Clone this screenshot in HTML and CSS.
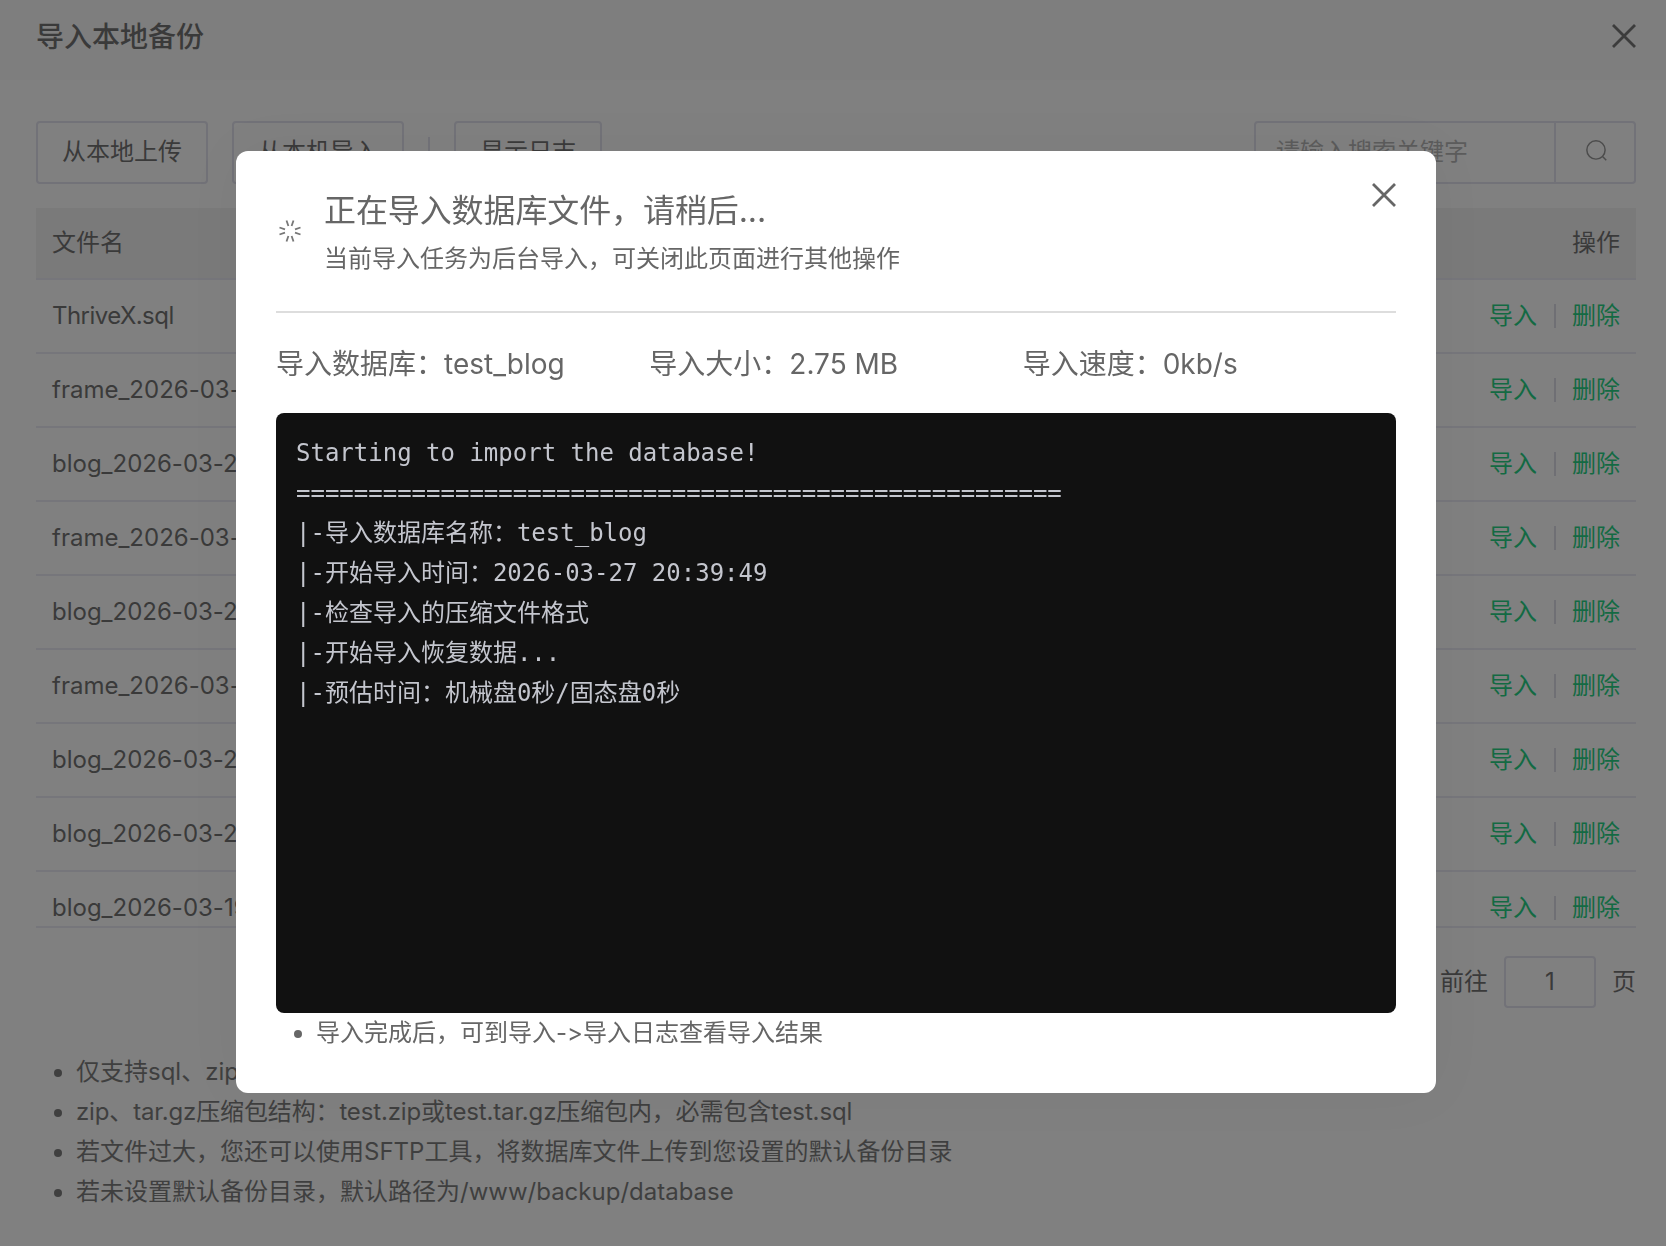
FILE: index.html
```html
<!DOCTYPE html>
<html lang="zh-CN">
<head>
<meta charset="utf-8">
<title>导入本地备份</title>
<link rel="stylesheet" href="styles.css">
</head>
<body>
<div class="drawer">
  <header class="drawer-head">
    <h1 class="drawer-title">导入本地备份</h1>
    <svg class="x-icon x-dark" viewBox="0 0 24 24"><path d="M1 1 23 23M23 1 1 23"/></svg>
  </header>
  <div class="drawer-body">
    <div class="toolbar">
      <button class="btn">从本地上传</button>
      <button class="btn">从本机导入</button>
      <span class="tool-sep"></span>
      <button class="btn">显示日志</button>
      <div class="search">
        <span class="search-input">请输入搜索关键字</span>
        <span class="search-btn">
          <svg class="search-icon" viewBox="0 0 20 20"><circle cx="9.5" cy="9.5" r="8.7"/><path d="M16 16 19.3 19.3"/></svg>
        </span>
      </div>
    </div>
    <div class="table">
      <div class="row row-head"><span>文件名</span><span class="ops-head">操作</span></div>
      <div class="table-body">
        <div class="row"><span class="tight">ThriveX.sql</span><span class="ops"><a>导入</a><i></i><a>删除</a></span></div>
        <div class="row"><span>frame_2026-03-27_20-39-49.sql</span><span class="ops"><a>导入</a><i></i><a>删除</a></span></div>
        <div class="row"><span>blog_2026-03-27_20-39-49.sql</span><span class="ops"><a>导入</a><i></i><a>删除</a></span></div>
        <div class="row"><span>frame_2026-03-26_02-30-01.sql</span><span class="ops"><a>导入</a><i></i><a>删除</a></span></div>
        <div class="row"><span>blog_2026-03-26_02-30-01.sql</span><span class="ops"><a>导入</a><i></i><a>删除</a></span></div>
        <div class="row"><span>frame_2026-03-25_02-30-01.sql</span><span class="ops"><a>导入</a><i></i><a>删除</a></span></div>
        <div class="row"><span>blog_2026-03-25_02-30-01.sql</span><span class="ops"><a>导入</a><i></i><a>删除</a></span></div>
        <div class="row"><span>blog_2026-03-24_02-30-01.sql</span><span class="ops"><a>导入</a><i></i><a>删除</a></span></div>
        <div class="row"><span>blog_2026-03-19_02-30-01.sql</span><span class="ops"><a>导入</a><i></i><a>删除</a></span></div>
      </div>
    </div>
    <div class="pager">
      <span>前往</span>
      <span class="pager-input">1</span>
      <span>页</span>
    </div>
    <ul class="tips">
      <li>仅支持sql、zip、tar.gz、sql.gz格式的数据库文件</li>
      <li class="tip-tight">zip、tar.gz压缩包结构：test.zip或test.tar.gz压缩包内，必需包含test.sql</li>
      <li>若文件过大，您还可以使用SFTP工具，将数据库文件上传到您设置的默认备份目录</li>
      <li>若未设置默认备份目录，默认路径为/www/backup/database</li>
    </ul>
  </div>
</div>

<div class="overlay">
  <section class="modal">
    <svg class="x-icon x-modal" viewBox="0 0 24 24"><path d="M1 1 23 23M23 1 1 23"/></svg>
    <div class="modal-head">
      <svg class="spinner" viewBox="0 0 24 24">
        <path d="M15.5 1.5 13.6 7"/>
        <path d="M22.5 8.5 17 10.4"/>
        <path d="M22.5 15.5 17 13.6"/>
        <path d="M15.5 22.5 13.6 17"/>
        <path d="M8.5 22.5 10.4 17"/>
        <path d="M1.5 15.5 7 13.6"/>
        <path d="M1.5 8.5 7 10.4"/>
        <path d="M8.5 1.5 10.4 7"/>
      </svg>
      <div>
        <h2 class="modal-title">正在导入数据库文件，请稍后...</h2>
        <p class="modal-sub">当前导入任务为后台导入，可关闭此页面进行其他操作</p>
      </div>
    </div>
    <div class="info">
      <span>导入数据库：test_blog</span>
      <span>导入大小：2.75 MB</span>
      <span>导入速度：0kb/s</span>
    </div>
    <pre class="terminal">Starting to import the database!
=====================================================
|-导入数据库名称：test_blog
|-开始导入时间：2026-03-27 20:39:49
|-检查导入的压缩文件格式
|-开始导入恢复数据...
|-预估时间：机械盘0秒/固态盘0秒</pre>
    <ul class="note">
      <li>导入完成后，可到导入-&gt;导入日志查看导入结果</li>
    </ul>
  </section>
</div>
</body>
</html>
```
FILE: styles.css
```css
* { box-sizing: border-box; }
html, body { margin: 0; height: 100%; }
body {
  background: #808080;
  color: #3a3a3a;
  font-family: "Inter", "Noto Sans CJK SC", sans-serif;
  font-size: 24px;
  line-height: 40px;
  font-variant-ligatures: none;
  font-feature-settings: "calt" 0;
  overflow: hidden;
}
h1, h2, p, ul { margin: 0; }

.drawer-head {
  height: 80px;
  padding: 0 30px 6px 36px;
  display: flex;
  align-items: center;
  justify-content: space-between;
  background: #7e7e7e;
}
.drawer-title { font-size: 28px; font-weight: 500; color: #3a3a3a; line-height: 40px; }
.x-icon { width: 24px; height: 24px; fill: none; stroke-width: 2.8; }
.x-dark { stroke: #3c3c3c; margin-bottom: 2px; }

.drawer-body { padding: 40px 30px 0 36px; }

.toolbar { display: flex; align-items: center; gap: 24px; height: 64px; }
.btn {
  height: 63px;
  padding: 0 24px;
  font: inherit;
  color: #3a3a3a;
  background: transparent;
  border: 2px solid #727278;
  border-radius: 4px;
}
.tool-sep { width: 2px; height: 32px; background: #727278; margin-top: 2px; }
.search {
  margin-left: auto;
  display: flex;
  width: 382px;
  height: 63px;
  border: 2px solid #727278;
  border-radius: 4px;
}
.search-input { flex: 1; padding: 9px 20px; color: #5c5c5c; }
.search-btn {
  width: 80px;
  border-left: 2px solid #727278;
  display: flex;
  align-items: center;
  justify-content: center;
}
.search-icon { width: 21px; height: 21px; margin: 0 0 4px 2px; fill: none; stroke: #4c4c4c; stroke-width: 1.4; }

.table { margin-top: 24px; }
.row {
  height: 74px;
  padding: 0 16px;
  display: flex;
  align-items: center;
  justify-content: space-between;
  border-bottom: 2px solid #76767b;
}
.row-head { height: 72px; background: #7a7a7a; }
.table-body { height: 648px; overflow: hidden; border-bottom: 2px solid #76767b; }
.tight { letter-spacing: -.55px; }
.ops { display: flex; align-items: center; color: #136a43; }
.ops i { width: 2px; height: 24px; margin: 0 16px 0 17px; background: #6f6f74; }

.pager {
  margin-top: 28px;
  height: 52px;
  display: flex;
  align-items: center;
  justify-content: flex-end;
  gap: 16px;
}
.pager-input {
  width: 92px;
  height: 52px;
  line-height: 48px;
  text-align: center;
  border: 2px solid #727278;
  border-radius: 4px;
}

.tips { margin-top: 44px; padding-left: 40px; color: #3f3f3f; }
.tip-tight { letter-spacing: -.14px; }

.overlay {
  position: fixed;
  inset: 0;
  display: flex;
  justify-content: center;
  align-items: flex-start;
  padding: 151px 0 0 6px;
}
.modal {
  position: relative;
  width: 1200px;
  height: 942px;
  padding: 40px;
  background: #fff;
  border-radius: 12px;
  color: #666;
  box-shadow: 0 0 60px rgba(0, 0, 0, .04);
}
.x-modal { position: absolute; top: 32px; right: 40px; stroke: #666; }
.modal-head {
  display: flex;
  align-items: center;
  gap: 22px;
  height: 122px;
  padding-bottom: 32px;
  border-bottom: 2px solid #ddd;
}
.spinner { width: 24px; height: 24px; margin: 0 0 8px 2px; fill: none; stroke: #777; stroke-width: 1.8; flex: none; }
.modal-title { font-size: 32px; font-weight: 400; line-height: 40px; color: #666; letter-spacing: -.1px; }
.modal-sub { margin-top: 8px; color: #666; }

.info {
  display: grid;
  grid-template-columns: repeat(3, 1fr);
  font-size: 28px;
  margin-top: 31px;
  color: #666;
}
.terminal {
  height: 600px;
  margin: 29px 0 0;
  padding: 20px;
  background: #111;
  border-radius: 8px;
  color: #c4c6ce;
  font-family: "DejaVu Sans Mono", "Noto Sans CJK SC", monospace;
  font-size: 24px;
  line-height: 40px;
}
.note { padding-left: 40px; color: #666; }
```
